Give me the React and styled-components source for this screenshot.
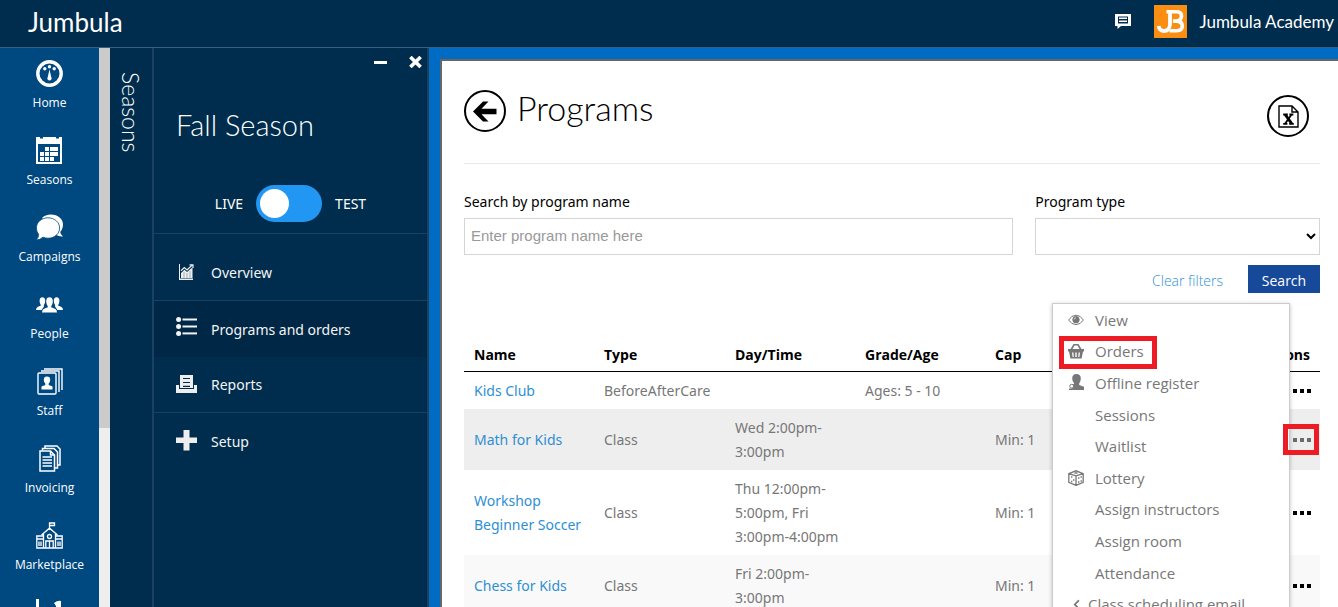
import React, { useState } from "react";
import styled, { createGlobalStyle } from "styled-components";
import { FaChevronLeft } from "react-icons/fa";

const GlobalStyle = createGlobalStyle`
  *, *::before, *::after {
    box-sizing: border-box;
  }
  body {
    margin: 0;
    font-family: "Noto Sans", "Open Sans", sans-serif;
    font-size: 14px;
    line-height: 24px;
    color: #000;
    overflow: hidden;
  }
  button, input, select {
    font: inherit;
  }
  svg {
    display: block;
  }
`;

const Page = styled.div`
  display: flex;
  flex-direction: column;
  height: 100vh;
`;
const Header = styled.header`
  flex: none;
  display: flex;
  align-items: center;
  height: 48px;
  padding: 0 4px 4px 28px;
  background-color: #002d4d;
  border-bottom: 1px solid #3b5f7b;
  color: #fff;
`;
const Brand = styled.a`
  margin-right: auto;
  font-family: Lato, sans-serif;
  font-size: 26px;
  line-height: 36px;
  color: #fff;
  text-decoration: none;
`;
const IconButton = styled.button`
  display: flex;
  padding: 0;
  border: 0;
  background: none;
  color: inherit;
  cursor: pointer;
`;
const Account = styled.a`
  display: flex;
  align-items: center;
  gap: 12px;
  margin-left: 23px;
  font-family: Lato, sans-serif;
  font-size: 17px;
  color: #fff;
  text-decoration: none;
`;
const Body = styled.div`
  flex: 1;
  min-height: 0;
  display: flex;
`;

const Nav = styled.nav`
  flex: none;
  display: flex;
  flex-direction: column;
  gap: 25px;
  width: 99px;
  padding-top: 12px;
  overflow: hidden;
  background-color: #004880;
`;
const NavItem = styled.a`
  flex: none;
  display: flex;
  flex-direction: column;
  align-items: center;
  gap: 6px;
  font-family: "Open Sans", sans-serif;
  font-size: 12px;
  line-height: 19px;
  color: #fff;
  text-decoration: none;
`;
const NavIcon = styled.span`
  display: flex;
  align-items: center;
  height: 27px;
`;
const ScrollTrack = styled.div`
  flex: none;
  width: 11px;
  background-color: #eee;
`;
const ScrollThumb = styled.div`
  height: 68%;
  background-color: #cbcbcb;
`;

const Strip = styled.div`
  flex: none;
  width: 44px;
  padding-top: 24px;
  display: flex;
  justify-content: center;
  background-color: #002d4d;
  border-right: 2px solid #1a4161;
  color: #fff;
  font-family: Lato, sans-serif;
  font-size: 23px;
  font-weight: 300;
`;
const StripText = styled.span`
  writing-mode: vertical-rl;
`;
const Panel = styled.aside`
  flex: none;
  width: 275px;
  background-color: #002d4d;
  border-right: 2px solid #1a4161;
  color: #fff;
`;
const PanelTop = styled.div`
  border-bottom: 1px solid #1a4161;
  padding-bottom: 11px;
`;
const WindowButtons = styled.div`
  display: flex;
  justify-content: flex-end;
  align-items: center;
  gap: 22px;
  height: 28px;
  padding-right: 5px;
`;
const PanelTitle = styled.h2`
  margin: 31px 0 43px 22px;
  font-family: Lato, sans-serif;
  font-size: 29px;
  line-height: 35px;
  font-weight: 300;
`;
const ModeRow = styled.label`
  display: flex;
  align-items: center;
  justify-content: center;
  gap: 13px;
  height: 37px;
`;
const Switch = styled.input`
  appearance: none;
  width: 66px;
  height: 37px;
  margin: 0;
  padding: 4px;
  border-radius: 19px;
  background-color: #2196f3;
  cursor: pointer;
  &::before {
    content: "";
    display: block;
    width: 29px;
    height: 29px;
    border-radius: 50%;
    background-color: #fff;
  }
  &:checked::before {
    margin-left: auto;
  }
`;
const PanelLink = styled.a`
  display: flex;
  align-items: center;
  gap: 14px;
  height: ${(props) => (props.$tall ? 67 : 56)}px;
  padding: ${(props) => (props.$tall ? "11px" : "1px")} 22px 0;
  border-bottom: ${(props) => (props.$line ? "1px solid #1a4161" : "0")};
  background-color: ${(props) => (props.$active ? "#002745" : "transparent")};
  color: #f4f4f4;
  text-decoration: none;
`;
const PanelIcon = styled.span`
  display: flex;
  justify-content: center;
  width: 21px;
`;

const Main = styled.main`
  flex: 1;
  min-width: 0;
  display: flex;
  padding: 11px 0 0 11px;
  background-color: #006bc2;
`;
const Sheet = styled.div`
  flex: 1;
  min-width: 0;
  padding: 0 18px 0 22px;
  border: solid #666;
  border-width: 2px 0 0 2px;
  background-color: #fff;
  overflow: hidden;
`;
const SheetHead = styled.div`
  display: flex;
  align-items: flex-start;
  gap: 11px;
  height: 103px;
  padding: 29px 11px 0 0;
  border-bottom: 1px solid #e9e9e9;
`;
const Round = styled.button`
  display: flex;
  align-items: center;
  justify-content: center;
  flex: none;
  width: 42px;
  height: 42px;
  padding: 0;
  border: 2px solid #000;
  border-radius: 50%;
  background: #fff;
  cursor: pointer;
`;
const ExportButton = styled(Round)`
  margin: 5px 0 0 auto;
`;
const Title = styled.h1`
  margin: 0;
  font-family: Lato, sans-serif;
  font-size: 34px;
  line-height: 36px;
  font-weight: 300;
`;
const Filters = styled.form`
  display: grid;
  grid-template-columns: minmax(0, 27fr) minmax(0, 14fr);
  column-gap: 22px;
  padding-top: 26px;
`;
const Field = styled.label`
  display: flex;
  flex-direction: column;
  gap: 4px;
`;
const TextInput = styled.input`
  height: 37px;
  padding: 0 6px 2px;
  border: 1px solid #d5d5d5;
  font-family: "Liberation Sans", Arial, sans-serif;
  font-size: 15px;
  &::placeholder {
    color: #999;
  }
`;
const Select = styled.select`
  height: 37px;
  border: 1px solid #d5d5d5;
  background: #fff;
`;
const FilterActions = styled.div`
  grid-column: 1 / -1;
  display: flex;
  justify-content: flex-end;
  align-items: center;
  gap: 25px;
  margin-top: 10px;
  font-family: "Open Sans", sans-serif;
`;
const ClearLink = styled.a`
  padding-top: 3px;
  color: #2f8fd3;
  font-weight: 300;
  text-decoration: none;
`;
const SearchButton = styled.button`
  width: 72px;
  height: 28px;
  padding: 3px 0 0;
  border: 0;
  background-color: #17499b;
  color: #fff;
  cursor: pointer;
`;

const TableArea = styled.div`
  position: relative;
  margin-top: 43px;
`;
const Table = styled.table`
  width: 100%;
  border-collapse: collapse;
  table-layout: fixed;
  color: #777;
`;
const Th = styled.th`
  width: ${(props) => props.$width || "auto"};
  padding: 7px 10px 4px;
  border-bottom: 1px solid #000;
  color: #000;
  font-family: "Open Sans", sans-serif;
  font-weight: 700;
  text-align: ${(props) => props.$align || "left"};
`;
const Tr = styled.tr`
  background-color: ${(props) => props.$bg || "#fff"};
`;
const Td = styled.td`
  padding: 7px 9px 6px 10px;
`;
const NameLink = styled.a`
  color: #2f8fd3;
  text-decoration: none;
`;
const More = styled.button`
  position: relative;
  display: flex;
  gap: 3px;
  margin-left: auto;
  padding: 0;
  border: 0;
  background: none;
  color: ${(props) => (props.$marked ? "#6b6b6b" : "#000")};
  cursor: pointer;
  &::after {
    content: "";
    display: ${(props) => (props.$marked ? "block" : "none")};
    position: absolute;
    z-index: 3;
    inset: -14px -8px -13px -10px;
    border: 5px solid #ed1c24;
  }
`;
const Dot = styled.span`
  width: 4px;
  height: 4px;
  background-color: currentColor;
`;

const Menu = styled.div`
  position: absolute;
  z-index: 2;
  top: -33px;
  right: 30px;
  width: 238px;
  height: 318px;
  display: grid;
  grid-auto-rows: 1fr;
  border: 1px solid #ccc;
  background-color: #fff;
  box-shadow: 0 1px 4px rgba(0, 0, 0, 0.25);
`;
const MenuItem = styled.a`
  position: relative;
  display: flex;
  align-items: center;
  gap: ${(props) => (props.$sub ? "4px" : "11px")};
  padding-left: 15px;
  color: #777;
  font-family: "Open Sans", sans-serif;
  font-size: 15px;
  text-decoration: none;
  &::after {
    content: "";
    display: ${(props) => (props.$marked ? "block" : "none")};
    position: absolute;
    inset: 0 132px -2px 6px;
    border: 5px solid #ed1c24;
  }
`;
const MenuIcon = styled.span`
  display: flex;
  justify-content: center;
  width: 16px;
`;

const HomeIcon = () => (
  <svg width="27" height="27" viewBox="0 0 27 27" fill="#fff">
    <circle cx="13.5" cy="13.5" r="11.7" fill="none" stroke="#fff" strokeWidth="3.4" />
    <circle cx="8.8" cy="8.8" r="1.7" />
    <circle cx="13.5" cy="6.8" r="1.7" />
    <circle cx="18.2" cy="8.8" r="1.7" />
    <path d="M13.5 9.5 15.6 18.5Q15.6 20.6 13.5 20.6Q11.4 20.6 11.4 18.5Z" />
  </svg>
);
const CalendarIcon = () => (
  <svg width="27" height="27" viewBox="0 0 27 27" fill="#fff">
    <path d="M0 0H4V1.5H7V0H20V1.5H23V0H26V27H0ZM2 7V25H24V7Z" fillRule="evenodd" />
    {[9, 14, 18].map((x) => <path key={x} d={`M${x} 10h4v4h-4z`} />)}
    {[4, 9, 14, 18].map((x) => <path key={x} d={`M${x} 15h4v4h-4z`} />)}
    {[4, 9, 14].map((x) => <path key={x} d={`M${x} 20h4v4h-4z`} />)}
  </svg>
);
const ChatIcon = () => (
  <svg width="27" height="27" viewBox="0 0 27 27" fill="#fff">
    <path d="M6 4Q9 .5 15 .5C22 .5 27 5 27 10.5C27 14 25.5 16.5 24.2 18Q24.4 20.5 27 22.5Q23 22.8 20 20.8Z" />
    <path
      d="M12 3.8C18.5 3.8 23.6 8.3 23.6 14S18.5 24.2 12 24.2Q9.5 24.2 7 23.2Q4 26 .2 26Q2.8 23.5 2.6 20.5Q.4 17.5 .4 14C.4 8.3 5.5 3.8 12 3.8Z"
      stroke="#004880"
      strokeWidth="0.8"
    />
  </svg>
);
const PeopleIcon = () => (
  <svg width="27" height="16" viewBox="0 0 27 16" fill="#fff">
    <path d="M3.6 4Q3.6.3 6.4.3T9.2 4Q9.2 6.8 7.8 8.2L8 9.4L5.5 13H0Q0 10.5 2 9.8L5 8.4Q3.6 6.8 3.6 4Z" />
    <path d="M23.4 4Q23.4.3 20.6.3T17.8 4Q17.8 6.8 19.2 8.2L19 9.4L21.5 13H27Q27 10.5 25 9.8L22 8.4Q23.4 6.8 23.4 4Z" />
    <path d="M10.2 4.5Q10.2.3 13.5.3T16.8 4.5Q16.8 7.7 15.2 9.2V10.3L19 11.8Q21 12.6 21 15.6H6Q6 12.6 8 11.8L11.8 10.3V9.2Q10.2 7.7 10.2 4.5Z" />
  </svg>
);
const StaffIcon = () => (
  <svg width="26" height="27" viewBox="0 0 26 27" fill="none" stroke="#fff" strokeWidth="1.4">
    <path d="M7 1H25V22M4 3H22V24" />
    <rect x="1" y="5" width="18" height="21" rx="1" />
    <path
      d="M6.8 12Q6.8 8.6 10 8.6T13.2 12Q13.2 14.3 11.7 15.6V17L15.5 18.4V21.5H4.5V18.4L8.3 17V15.6Q6.8 14.3 6.8 12Z"
      fill="#fff"
      stroke="none"
    />
  </svg>
);
const InvoiceIcon = () => (
  <svg width="22" height="27" viewBox="0 0 22 27" fill="none" stroke="#fff" strokeWidth="1.5">
    <path d="M6 3.5V1H18L21 4V20H19M3.5 5.5V3.5H15L18.5 7V23H16" />
    <path d="M1 6H11.5L15.5 10V26H1ZM11.5 6V10H15.5" />
    <path d="M3.5 12H13M3.5 15H13M3.5 18H13M3.5 21H13" />
  </svg>
);
const SchoolIcon = () => (
  <svg width="27" height="27" viewBox="0 0 27 27" fill="none" stroke="#fff" strokeWidth="1.3">
    <path d="M13.5 7V1H18.5V3.5H14M5.5 13 13.5 6.2 21.5 13M7.5 12V26M19.5 12V26M7.5 14H.8V26H26.2V14H19.5M.8 17H7M20 17H26" />
    <circle cx="13.5" cy="14.5" r="2" />
    <path d="M9.8 26V19H17.2V26M13.5 19V26M3 19.5V24M5 19.5V24M22 19.5V24M24 19.5V24" />
  </svg>
);
const BarsIcon = () => (
  <svg width="27" height="27" viewBox="0 0 27 27" fill="#fff">
    <path d="M0 0H3V24H27V27H0ZM5 13H10V22H5ZM12 8H17V22H12ZM18 4Q22 1 25 2V22H20V7Z" />
  </svg>
);
const MessageIcon = () => (
  <svg width="16" height="15" viewBox="0 0 16 15" fill="#fff">
    <path d="M0 0H16V12H6L2.5 15V12H0ZM3 2.5V9.5H13V2.5Z" fillRule="evenodd" />
    <path d="M4 3.5H12V5H4ZM4 6.5H12V8H4Z" />
  </svg>
);
const LogoIcon = () => (
  <svg width="33" height="33" viewBox="0 0 33 33" fill="none">
    <path fill="#f98e12" d="M0 0H33V33H0Z" />
    <path d="M12.5 6.8H23Q27.5 7 27.5 11T23 16.1H17.6M22.5 16.1Q28.3 16.4 28.3 21T22.5 25.8H15.5" stroke="#fff" strokeWidth="3.6" />
    <path d="M16 6V20Q15.5 26 9.7 26Q5.3 25.6 4.6 21" stroke="#fff" strokeWidth="3.8" />
    <path d="M18.5 9V20Q18 23 16.4 24.4" stroke="#f98e12" strokeWidth="0.9" />
  </svg>
);
const MinusIcon = () => (
  <svg width="13" height="3" viewBox="0 0 13 3">
    <path fill="#fff" d="M0 0H13V3H0Z" />
  </svg>
);
const CloseIcon = () => (
  <svg width="13" height="12" viewBox="0 0 13 12">
    <path stroke="#fff" strokeWidth="3.6" d="M1.4 1 11.6 11M11.6 1 1.4 11" />
  </svg>
);
const OverviewIcon = () => (
  <svg width="15" height="18" viewBox="0 0 15 18">
    <path fill="#eee" d="M0 0H1V14.6H14V16H0ZM2 9 5.5 5.8 8 8 13.5 3.2V14H2Z" />
    <path fill="none" stroke="#eee" strokeWidth="1.2" d="M2 6.8 5.3 3.6 8 6 13 1.2M10.5.8H14V4" />
    <path stroke="#8295a4" strokeWidth="0.7" d="M5 8V14M8 9V14M11 7V14" />
  </svg>
);
const ListIcon = () => (
  <svg width="21" height="26" viewBox="0 0 21 26" fill="#f4f4f4">
    {[2.5, 9.5, 16.4].map((y) => (
      <g key={y}>
        <circle cx="2.6" cy={y} r="2.5" />
        <path d={`M6.5 ${y - 1}H21v2H6.5z`} />
      </g>
    ))}
  </svg>
);
const ReportIcon = () => (
  <svg width="21" height="20" viewBox="0 0 21 20">
    <path fill="#eee" d="M0 10H3V14H18V10H21V18H0Z" />
    <path fill="#eee" d="M4 0H17V13H4Z" />
    <path stroke="#002d4d" strokeWidth="1.2" d="M7 3.5H14M7 7.5H14M7 11.3H14" />
  </svg>
);
const PlusIcon = () => (
  <svg width="21" height="24" viewBox="0 0 21 24">
    <path fill="#eee" d="M7.5 0H13.5V7.5H21V13H13.5V20.5H7.5V13H0V7.5H7.5Z" />
  </svg>
);
const BackIcon = () => (
  <svg width="24" height="21" viewBox="0 0 24 21">
    <path d="M0 10.5 10 .5H15.5L8.5 7.8H23.5V13.2H8.5L15.5 20.5H10Z" />
  </svg>
);
const ExcelIcon = () => (
  <svg width="21" height="23" viewBox="0 0 21 23">
    <path fill="none" stroke="#000" strokeWidth="1.4" d="M1 1H14L20 7V22H1ZM14 1V7H20" />
    <path stroke="#000" strokeWidth="3" d="M7.2 9.5 13.6 18.5" />
    <path stroke="#000" strokeWidth="1.8" d="M13.6 9.5 7.2 18.5M5.2 9.5H9.8M11.4 9.5H15.4M5.2 18.8H9.4M11.2 18.8H15.8" />
  </svg>
);
const EyeIcon = () => (
  <svg width="16" height="12" viewBox="0 0 16 12" fill="none" stroke="#777">
    <path d="M.6 6Q3.5 1.2 8 1.2T15.4 6Q12.5 10.6 8 10.6T.6 6Z" />
    <circle cx="8" cy="5.7" r="3.2" fill="#777" />
    <path d="M6.2 5.4Q6.4 4 7.8 3.8" stroke="#fff" strokeWidth="0.8" />
  </svg>
);
const BasketIcon = () => (
  <svg width="16" height="15" viewBox="0 0 16 15" fill="#777">
    <path d="M0 5H16V7.5H15L13.6 14.5H2.4L1 7.5H0ZM4 8.5 4.6 13H5.8L5.4 8.5ZM7.3 8.5V13H8.7V8.5ZM10.6 8.5 10.2 13H11.4L12 8.5Z" fillRule="evenodd" />
    <path d="M3.2 5.5 6 .8H10L12.8 5.5" fill="none" stroke="#777" strokeWidth="1.6" />
  </svg>
);
const PersonIcon = () => (
  <svg width="15" height="17" viewBox="0 0 15 17" fill="#777">
    <path d="M3.2 4.5Q3.2 0 7.5 0T11.8 4.5Q11.8 7.8 10.2 9.4V11L15 12.8V16H3.5V11L5.2 9.4Q3.2 7.8 3.2 4.5Z" />
    <circle cx="2.7" cy="12.2" r="1.9" fill="#fff" stroke="#777" />
    <path d="M0 14.5H5V16H0Z" />
  </svg>
);
const DiceIcon = () => (
  <svg width="16" height="16" viewBox="0 0 16 16" fill="none" stroke="#777" strokeWidth="1.3">
    <path d="M.8 3.6 8 .8 15.2 3.6V12.4L8 15.4 .8 12.4ZM.8 3.6 8 5.8 15.2 3.6M8 5.8V15.4" />
    <path d="M3 7h1.4M5 10h1.4M3 11.5h1.4M10 8h1.4M12.5 7h1.4M10 12h1.4M12.5 11h1.4M6.5 3h3" strokeWidth="1.5" />
  </svg>
);

const navItems = [
  ["Home", HomeIcon],
  ["Seasons", CalendarIcon],
  ["Campaigns", ChatIcon],
  ["People", PeopleIcon],
  ["Staff", StaffIcon],
  ["Invoicing", InvoiceIcon],
  ["Marketplace", SchoolIcon],
  ["", BarsIcon],
];

const panelLinks = [
  { label: "Overview", icon: OverviewIcon, tall: true, line: true },
  { label: "Programs and orders", icon: ListIcon, active: true },
  { label: "Reports", icon: ReportIcon, line: true },
  { label: "Setup", icon: PlusIcon },
];

const programs = [
  { name: "Kids Club", type: "BeforeAfterCare", time: "", ages: "Ages: 5 - 10", cap: "" },
  { name: "Math for Kids", type: "Class", time: "Wed 2:00pm-3:00pm", ages: "", cap: "Min: 1", bg: "#eee", marked: true },
  { name: "Workshop Beginner Soccer", type: "Class", time: "Thu 12:00pm-5:00pm, Fri 3:00pm-4:00pm", ages: "", cap: "Min: 1" },
  { name: "Chess for Kids", type: "Class", time: "Fri 2:00pm-3:00pm", ages: "", cap: "Min: 1", bg: "#f9f9f9" },
];

const menuItems = [
  { label: "View", icon: <EyeIcon /> },
  { label: "Orders", icon: <BasketIcon />, marked: true },
  { label: "Offline register", icon: <PersonIcon /> },
  { label: "Sessions" },
  { label: "Waitlist" },
  { label: "Lottery", icon: <DiceIcon /> },
  { label: "Assign instructors" },
  { label: "Assign room" },
  { label: "Attendance" },
  { label: "Class scheduling email", icon: <FaChevronLeft size={11} />, sub: true },
];

function ProgramTable() {
  return (
    <Table>
      <thead>
        <tr>
          <Th $width="130px">Name</Th>
          <Th $width="131px">Type</Th>
          <Th $width="130px">Day/Time</Th>
          <Th $width="130px">Grade/Age</Th>
          <Th>Cap</Th>
          <Th $width="90px" $align="right">Actions</Th>
        </tr>
      </thead>
      <tbody>
        {programs.map((p) => (
          <Tr key={p.name} $bg={p.bg}>
            <Td><NameLink href="#">{p.name}</NameLink></Td>
            <Td>{p.type}</Td>
            <Td>{p.time}</Td>
            <Td>{p.ages}</Td>
            <Td>{p.cap}</Td>
            <Td>
              <More type="button" aria-label={`Actions for ${p.name}`} $marked={p.marked}>
                <Dot /><Dot /><Dot />
              </More>
            </Td>
          </Tr>
        ))}
      </tbody>
    </Table>
  );
}

function App() {
  const [test, setTest] = useState(false);
  const [query, setQuery] = useState("");

  return (
    <Page>
      <GlobalStyle />
      <Header>
        <Brand href="#">Jumbula</Brand>
        <IconButton type="button" aria-label="Messages"><MessageIcon /></IconButton>
        <Account href="#"><LogoIcon />Jumbula Academy</Account>
      </Header>
      <Body>
        <Nav>
          {navItems.map(([label, Icon]) => (
            <NavItem href="#" key={label}>
              <NavIcon><Icon /></NavIcon>
              {label}
            </NavItem>
          ))}
        </Nav>
        <ScrollTrack><ScrollThumb /></ScrollTrack>
        <Strip><StripText>Seasons</StripText></Strip>
        <Panel>
          <PanelTop>
            <WindowButtons>
              <IconButton type="button" aria-label="Minimize"><MinusIcon /></IconButton>
              <IconButton type="button" aria-label="Close"><CloseIcon /></IconButton>
            </WindowButtons>
            <PanelTitle>Fall Season</PanelTitle>
            <ModeRow>
              LIVE
              <Switch type="checkbox" role="switch" checked={test} onChange={() => setTest(!test)} />
              TEST
            </ModeRow>
          </PanelTop>
          {panelLinks.map(({ label, icon: Icon, tall, line, active }) => (
            <PanelLink href="#" key={label} $tall={tall} $line={line} $active={active}>
              <PanelIcon><Icon /></PanelIcon>
              {label}
            </PanelLink>
          ))}
        </Panel>
        <Main>
          <Sheet>
            <SheetHead>
              <Round type="button" aria-label="Back"><BackIcon /></Round>
              <Title>Programs</Title>
              <ExportButton type="button" aria-label="Export to Excel"><ExcelIcon /></ExportButton>
            </SheetHead>
            <Filters onSubmit={(e) => e.preventDefault()}>
              <Field>
                Search by program name
                <TextInput
                  type="text"
                  placeholder="Enter program name here"
                  value={query}
                  onChange={(e) => setQuery(e.target.value)}
                />
              </Field>
              <Field>
                Program type
                <Select defaultValue="">
                  <option value=""></option>
                </Select>
              </Field>
              <FilterActions>
                <ClearLink href="#" onClick={() => setQuery("")}>Clear filters</ClearLink>
                <SearchButton type="submit">Search</SearchButton>
              </FilterActions>
            </Filters>
            <TableArea>
              <ProgramTable />
              <Menu>
                {menuItems.map((item) => (
                  <MenuItem href="#" key={item.label} $marked={item.marked} $sub={item.sub}>
                    <MenuIcon>{item.icon}</MenuIcon>
                    {item.label}
                  </MenuItem>
                ))}
              </Menu>
            </TableArea>
          </Sheet>
        </Main>
      </Body>
    </Page>
  );
}

export default App;
